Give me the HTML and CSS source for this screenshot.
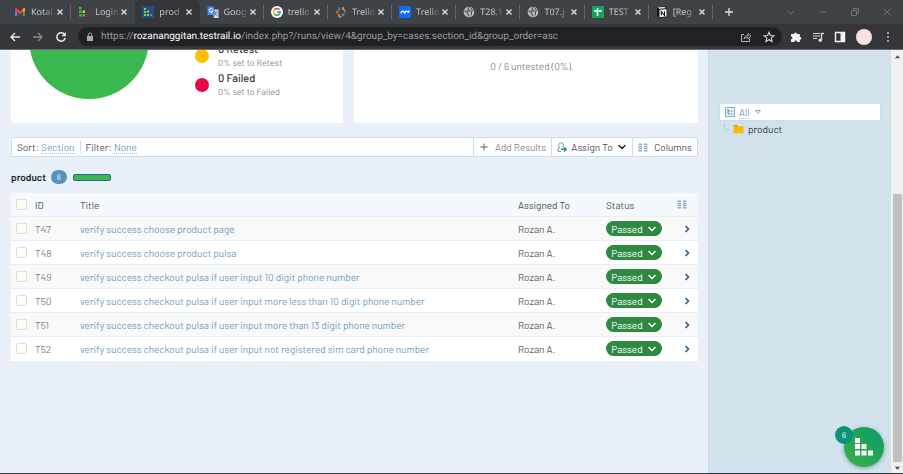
FILE: index.html
```html
<!DOCTYPE html>
<html lang="en">
<head>
<meta charset="utf-8">
<title>product - TestRail</title>
<link rel="stylesheet" href="styles.css">
</head>
<body>
<svg class="defs" aria-hidden="true">
  <symbol id="close" viewBox="0 0 8 8"><path d="M1.500 1.500l5 5m0-5l-5 5" stroke="currentColor" stroke-width="1.300"/></symbol>
  <symbol id="globe" viewBox="0 0 12 12"><circle cx="6" cy="6" r="5.300" fill="#bdc1c6"/><path d="M1.500 4.500l2.500 2.300 1 .2v1.500l1.200 2M6.500 1.200L5 2.500l1 1.200L4.500 5h3l1.200 1.500L8 9.500M8.500 2v1.500l2 1.500" fill="none" stroke="#484b4f" stroke-width="1.100"/></symbol>
  <symbol id="chev" viewBox="0 0 10 10"><path d="M2 3.500l3 3 3-3" fill="none" stroke="currentColor" stroke-width="1.500" stroke-linecap="round" stroke-linejoin="round"/></symbol>
  <symbol id="next" viewBox="0 0 8 10"><path d="M2.500 2l3 3-3 3" fill="none" stroke="#34648c" stroke-width="1.700"/></symbol>
  <symbol id="cols" viewBox="0 0 10 9"><path d="M.5 1.200h3.600M.5 3.400h3.600M.5 5.600h3.600M.5 7.800h3.600M5.900 1.200h3.600M5.900 3.400h3.600M5.900 5.600h3.600M5.900 7.800h3.600" stroke="#8fb0c6" stroke-width="1.500"/></symbol>
</svg>

<header class="browser">
  <div class="strip">
    <nav class="tabs" aria-label="Tabs">
      <div class="tab"><svg class="fav" viewBox="0 0 12 12"><path d="M1 10V3.500h2.200V10z" fill="#4285f4"/><path d="M8.800 10V3.500H11V10z" fill="#34a853"/><path d="M1 4.500V2.600L2.200 2 6 5l3.800-3 1.200.6v1.900L6 8.200z" fill="#ea4335"/><path d="M9 3l1.200-1 .8.800v1.800L9 6z" fill="#fbbc04"/></svg><span class="name">Kotal</span><button class="x" aria-label="Close"><svg><use href="#close"/></svg></button></div>
      <div class="tab nosep"><svg class="fav" viewBox="0 0 12 12"><path d="M1 1h2.500v2.500H1zM1 4.500h2.500V7H1zM1 8h2.500v2.500H1zM4.500 8H7v2.500H4.500z" fill="#3dba52"/><path d="M4.500 4.500H7V7H4.500z" fill="#fdc300"/><path d="M8.500 8.500H11V11H8.500z" fill="#e80548"/></svg><span class="name">Login</span><button class="x" aria-label="Close"><svg><use href="#close"/></svg></button></div>
      <div class="tab active"><svg class="fav" viewBox="0 0 12 12"><path d="M0 0h12v12H0z" fill="#1e5288"/><path d="M2 2h2v2H2zM2 5h2v2H2zM2 8h2v2H2zM5 8h2v2H5z" fill="#7fd34f"/><path d="M5 4.500h2v2H5z" fill="#fdc300"/><path d="M8 8h2v2H8z" fill="#ff4778"/></svg><span class="name">prod</span><button class="x" aria-label="Close"><svg><use href="#close"/></svg></button></div>
      <div class="tab"><svg class="fav" viewBox="0 0 12 12"><path d="M5 3.500h6.500V12H7z" fill="#d6d9dc"/><path d="M7 6h4M9 5v1c0 2-1 3-2 4m1-3l2.500 3" stroke="#6b7f99" fill="none" stroke-width=".8"/><path d="M.5.5h6L9 9H.5z" fill="#4a8af4"/><path d="M5.800 3.500A1.900 1.900 0 1 0 6 5H4.300" fill="none" stroke="#fff"/></svg><span class="name">Goog</span><button class="x" aria-label="Close"><svg><use href="#close"/></svg></button></div>
      <div class="tab"><svg class="fav" viewBox="0 0 12 12"><circle cx="6" cy="6" r="6" fill="#fff"/><g fill="none" stroke-width="1.500"><path d="M3.300 4A3.300 3.300 0 0 1 8.500 3.700" stroke="#ea4335"/><path d="M3.200 4.200a3.300 3.300 0 0 0 0 3.600" stroke="#fbbc05"/><path d="M3.200 7.800a3.300 3.300 0 0 0 5 .6" stroke="#34a853"/><path d="M8.200 8.400C9 7.800 9.300 7 9.300 6.100H6" stroke="#4285f4"/></g></svg><span class="name">trello</span><button class="x" aria-label="Close"><svg><use href="#close"/></svg></button></div>
      <div class="tab"><svg class="fav" viewBox="0 0 12 12"><g fill="none" stroke-width="1.500"><path d="M4.500 1.500v2l-1.200 1" stroke="#36a6d8"/><path d="M8 1v2l2 1.500" stroke="#e9a03b"/><path d="M1 5l2 1-1.500 2" stroke="#e5533d"/><path d="M4 8v2l2 1.500" stroke="#e9a03b"/><path d="M7.500 10.500V9l2-1" stroke="#36a6d8"/><path d="M9 6h2" stroke="#e5533d"/></g></svg><span class="name">Trello</span><button class="x" aria-label="Close"><svg><use href="#close"/></svg></button></div>
      <div class="tab"><svg class="fav" viewBox="0 0 12 12"><rect width="12" height="12" rx="1" fill="#0b6cff"/><path d="M1.800 7.500c1-3 2-2.800 3-1.800s.8 2 1.800.2m-1.200 1.600c1-3 2-2.800 3-1.800s.8 1 1.800-1.200" fill="none" stroke="#fff" stroke-width="1.300"/></svg><span class="name">Trello</span><button class="x" aria-label="Close"><svg><use href="#close"/></svg></button></div>
      <div class="tab"><svg class="fav"><use href="#globe"/></svg><span class="name">T28.1</span><button class="x" aria-label="Close"><svg><use href="#close"/></svg></button></div>
      <div class="tab"><svg class="fav"><use href="#globe"/></svg><span class="name">T07.j</span><button class="x" aria-label="Close"><svg><use href="#close"/></svg></button></div>
      <div class="tab"><svg class="fav" viewBox="0 0 12 12"><path d="M0 0h12v12H0z" fill="#15a35c"/><path d="M2 5h8M5.500 2v8" stroke="#fff" stroke-width="1.500"/></svg><span class="name">TEST</span><button class="x" aria-label="Close"><svg><use href="#close"/></svg></button></div>
      <div class="tab"><svg class="fav" viewBox="0 0 12 12"><path d="M1 1.500L8.500.5 11 2.500V11l-7.500.7L1 9.500z" fill="#111"/><path d="M1.500 1.500L8.300 1l1.500 1.300-6.500.5z" fill="#fff"/><path d="M3.500 3.800l7-.5v7.200l-7 .5z" fill="#fff"/><path d="M5.300 9.500v-4l3.200 4v-4.200" fill="none" stroke="#111" stroke-width="1.100"/></svg><span class="name">[Reg</span><button class="x" aria-label="Close"><svg><use href="#close"/></svg></button></div>
    </nav>
    <div class="window">
      <button aria-label="New tab"><svg viewBox="0 0 10 10"><path d="M5 1v8M1 5h8" stroke="#dee1e6" stroke-width="1.300"/></svg></button>
      <span class="spacer"></span>
      <button aria-label="Search tabs"><svg viewBox="0 0 10 10"><path d="M1.500 3.500L5 7l3.500-3.500" fill="none" stroke="#6e7175"/></svg></button>
      <button aria-label="Minimize"><svg viewBox="0 0 10 10"><path d="M1.500 5h7" stroke="#6e7175"/></svg></button>
      <button aria-label="Restore"><svg viewBox="0 0 10 10"><path d="M1.500 3.500h5v5h-5zM3.500 3V1.500h5v5H7" fill="none" stroke="#6e7175"/></svg></button>
      <button aria-label="Close window"><svg viewBox="0 0 10 10"><path d="M1.500 1.500l7 7m0-7l-7 7" stroke="#6e7175"/></svg></button>
    </div>
  </div>
  <div class="navbar">
    <button aria-label="Back"><svg viewBox="0 0 12 12"><path d="M11 6H2m4-4L2 6l4 4" fill="none" stroke="#e8eaed" stroke-width="1.400"/></svg></button>
    <button aria-label="Forward"><svg viewBox="0 0 12 12"><path d="M1 6h9M6 2l4 4-4 4" fill="none" stroke="#898b8e" stroke-width="1.300"/></svg></button>
    <button aria-label="Reload"><svg viewBox="0 0 12 12"><path d="M9.800 4A4.200 4.200 0 1 0 10.200 6.800" fill="none" stroke="#e8eaed" stroke-width="1.500"/><path d="M10.800 1v4.300H6.500z" fill="#e8eaed"/></svg></button>
    <div class="address">
      <svg class="lock" viewBox="0 0 8 10"><path d="M1 4h6v5H1z" fill="#a6a9ad"/><path d="M2.300 4V2.700a1.700 1.700 0 0 1 3.400 0V4" fill="none" stroke="#a6a9ad"/></svg>
      <span class="url">https://<b>rozananggitan.testrail.io</b>/index.php?/runs/view/4&amp;group_by=cases:section_id&amp;group_order=asc</span>
      <button aria-label="Share"><svg viewBox="0 0 12 12"><path d="M4 3.500H1.500v7h8V8M4 8c.3-2.300 1.800-3.500 4-3.500V2.500l3 2.800-3 2.800V6.300C6.300 6.200 5 6.800 4 8z" fill="none" stroke="#b4b7bb"/></svg></button>
      <button aria-label="Bookmark"><svg viewBox="0 0 12 12"><path d="M6 1.300l1.400 3.200 3.400.3-2.600 2.300.8 3.400-3-1.800-3 1.800.8-3.400L1.200 4.800l3.400-.3z" fill="none" stroke="#d4d6d9" stroke-width="1.100"/></svg></button>
    </div>
    <div class="actions">
      <button aria-label="Extensions"><svg viewBox="0 0 12 12"><path d="M1 3h3a1.500 1.500 0 1 1 3 0h2.800v2.700a1.500 1.500 0 1 1 0 3V11H7.200a1.400 1.400 0 0 0-2.800 0H1V8.300a1.400 1.400 0 0 0 0-2.800z" fill="#f1f3f4"/></svg></button>
      <button aria-label="Media"><svg viewBox="0 0 12 12"><path d="M1 2.500h7M1 5h7M1 7.500h4" stroke="#d4d6d9" stroke-width="1.200"/><path d="M9.500 9V2.500H12" fill="none" stroke="#d4d6d9" stroke-width="1.300"/><circle cx="8.200" cy="9.200" r="1.800" fill="#d4d6d9"/></svg></button>
      <button aria-label="Side panel"><svg viewBox="0 0 12 12"><path d="M1.500 1.500h9v9h-9z" fill="none" stroke="#f1f3f4" stroke-width="1.400"/><path d="M6.500 1.500h4v9h-4z" fill="#f1f3f4"/></svg></button>
      <button class="avatar" aria-label="Profile"></button>
      <button aria-label="Menu"><svg viewBox="0 0 12 12"><path d="M5.200 1.200h1.600v1.600H5.200zM5.200 5.200h1.600v1.600H5.200zM5.200 9.200h1.600v1.600H5.200z" fill="#e8eaed"/></svg></button>
    </div>
  </div>
</header>

<div class="page">
  <main class="main">
    <section class="summary">
      <div class="card status">
        <svg class="pie" viewBox="0 0 120 120"><circle cx="60" cy="60" r="60" fill="#3cb850"/></svg>
        <ul class="legend">
          <li><i class="dot retest"></i><div><strong>0 Retest</strong><small>0% set to Retest</small></div></li>
          <li><i class="dot failed"></i><div><strong>0 Failed</strong><small>0% set to Failed</small></div></li>
        </ul>
      </div>
      <div class="card untested"><p>0 / 6 untested (0%).</p></div>
    </section>

    <div class="toolbar">
      <div class="group">Sort: <a href="#">Section</a></div>
      <div class="group filter">Filter: <a href="#">None</a></div>
      <button class="tool add"><svg viewBox="0 0 10 10"><path d="M5 1.500v7M1.500 5h7" stroke="#888" stroke-width="1.300"/></svg>Add Results</button>
      <button class="tool assign"><svg viewBox="0 0 10 10"><path d="M1 9.300c-.5-2 .3-2.800 1.500-3.300C.8 3 2 .8 4 .8S7 2.500 6 5" fill="none" stroke="#5d8fb5"/><path d="M1 9.300h3" stroke="#5d8fb5"/><path d="M4 7.300h5M7 5.200l2.200 2.100L7 9.400" fill="none" stroke="#159a78" stroke-width="1.400"/></svg>Assign To<svg class="caret" viewBox="0 0 10 10"><use href="#chev"/></svg></button>
      <button class="tool columns"><svg><use href="#cols"/></svg>Columns</button>
    </div>

    <h2 class="section">product <span class="count">6</span><span class="progress"></span></h2>

    <table class="cases">
      <colgroup><col class="c-check"><col class="c-id"><col><col class="c-user"><col class="c-status"><col class="c-next"></colgroup>
      <thead><tr><th><input type="checkbox" aria-label="Select all"></th><th>ID</th><th>Title</th><th>Assigned To</th><th>Status</th><th><svg><use href="#cols"/></svg></th></tr></thead>
      <tbody>
        <tr><td><input type="checkbox" aria-label="Select T47"></td><td>T47</td><td><a href="#">verify success choose product page</a></td><td>Rozan A.</td><td><button class="pill">Passed<svg><use href="#chev"/></svg></button></td><td><svg><use href="#next"/></svg></td></tr>
        <tr><td><input type="checkbox" aria-label="Select T48"></td><td>T48</td><td><a href="#">verify success choose product pulsa</a></td><td>Rozan A.</td><td><button class="pill">Passed<svg><use href="#chev"/></svg></button></td><td><svg><use href="#next"/></svg></td></tr>
        <tr><td><input type="checkbox" aria-label="Select T49"></td><td>T49</td><td><a href="#">verify success checkout pulsa if user input 10 digit phone number</a></td><td>Rozan A.</td><td><button class="pill">Passed<svg><use href="#chev"/></svg></button></td><td><svg><use href="#next"/></svg></td></tr>
        <tr><td><input type="checkbox" aria-label="Select T50"></td><td>T50</td><td><a href="#">verify success checkout pulsa if user input more less than 10 digit phone number</a></td><td>Rozan A.</td><td><button class="pill">Passed<svg><use href="#chev"/></svg></button></td><td><svg><use href="#next"/></svg></td></tr>
        <tr><td><input type="checkbox" aria-label="Select T51"></td><td>T51</td><td><a href="#">verify success checkout pulsa if user input more than 13 digit phone number</a></td><td>Rozan A.</td><td><button class="pill">Passed<svg><use href="#chev"/></svg></button></td><td><svg><use href="#next"/></svg></td></tr>
        <tr><td><input type="checkbox" aria-label="Select T52"></td><td>T52</td><td><a href="#">verify success checkout pulsa if user input not registered sim card phone number</a></td><td>Rozan A.</td><td><button class="pill">Passed<svg><use href="#chev"/></svg></button></td><td><svg><use href="#next"/></svg></td></tr>
      </tbody>
    </table>
  </main>

  <aside class="sidebar">
    <div class="picker"><svg viewBox="0 0 10 10"><path d="M.5.5h9v9h-9z" fill="#eef6fc" stroke="#7ba9d0"/><path d="M3 2v5h2M3 4h2M6 4h2M6 7h2" fill="none" stroke="#4f86b5" stroke-width="1"/></svg><a href="#">All</a><svg class="tri" viewBox="0 0 8 8"><path d="M1.500 2.500h5L4 5.500z" fill="#fff" stroke="#8aa"/></svg></div>
    <div class="node"><i class="branch"></i><svg viewBox="0 0 12 10"><path d="M.5.500h4l1 1.500h6v7.500H.5z" fill="#fbb900"/><path d="M.5.500h4l1 1.500h-5z" fill="#dc9d00"/></svg>product</div>
  </aside>

  <div class="scroll" aria-hidden="true">
    <svg viewBox="0 0 8 8"><path d="M1 5.500h6L4 2z" fill="#505050"/></svg>
    <span class="thumb"></span>
    <svg viewBox="0 0 8 8"><path d="M1 2.500h6L4 6z" fill="#505050"/></svg>
  </div>

  <button class="chat" aria-label="Help">
    <svg viewBox="0 0 18 18"><path d="M0 0h5v5H0zM0 6h5v5H0zM6.500 6h5v5h-5zM0 12.500h5v5H0zM6.500 12.500h5v5h-5zM13 12.500h5v5h-5z" fill="#fff"/></svg>
    <span class="badge">6</span>
  </button>
</div>
</body>
</html>
```
FILE: styles.css
```css
* { box-sizing: border-box; }
body {
  margin: 0;
  height: 100vh;
  display: flex;
  flex-direction: column;
  overflow: hidden;
  font: 10px/12px "Barlow", Roboto, sans-serif;
  text-rendering: geometricPrecision;
  color: #505050;
  background: #3a3c40;
}
button {
  display: flex;
  align-items: center;
  justify-content: center;
  padding: 0;
  border: 0;
  background: none;
  font: inherit;
  color: inherit;
  text-rendering: inherit;
}
svg { display: block; flex: none; width: 10px; height: 10px; }
a { color: #6d9cc6; text-decoration: none; }
.defs { position: absolute; width: 0; height: 0; }

/* Browser frame */
.browser { flex: none; background: #35363a; border-bottom: 1px solid #6b6a6e; }
.strip { display: flex; height: 24px; padding-left: 7px; background: #3f4246; }
.tabs { flex: 1; display: grid; grid-template-columns: repeat(11, minmax(0, 1fr)); }
.tab { position: relative; display: flex; align-items: center; padding: 0 7px; color: #c4c6ca; font-family: "Noto Sans", sans-serif; font-size: 9px; }
.tab::after { content: ""; position: absolute; right: 0; top: 5px; height: 14px; width: 1px; background: #64676b; }
.tab.active { background: #35363a; border-radius: 5px 5px 0 0; }
.tab.nosep::after, .tab.active::after { display: none; }
.fav { width: 12px; height: 12px; }
.name { flex: 1; margin-left: 5px; white-space: nowrap; mask-image: linear-gradient(90deg, #000 50%, transparent); }
.x { color: #dee1e6; }
.x svg { width: 8px; height: 8px; }
.window { flex: none; width: 190px; display: flex; align-items: center; gap: 22px; padding: 0 11px; }
.window .spacer { flex: 1; }
.navbar { display: flex; align-items: center; height: 25px; padding-left: 9px; }
.navbar svg { width: 12px; height: 12px; }
.navbar > button { margin-right: 11px; }
.address { flex: 1; display: flex; align-items: center; gap: 11px; height: 19px; padding: 0 7px 0 8px; border-radius: 10px; background: #202124; }
.navbar .lock { width: 8px; height: 10px; margin-right: -4px; }
.url { flex: 1; white-space: nowrap; font: 10px/14px Roboto, sans-serif; color: #9a9da1; }
.url b { font-weight: 400; color: #fff; }
.actions { flex: none; display: flex; align-items: center; gap: 10px; padding: 0 9px 0 8px; }
.avatar { width: 16px; height: 16px; border-radius: 50%; background: #fbe3e5; }

/* Page */
.page { position: relative; flex: 1; min-height: 0; display: flex; margin-bottom: 1px; background: #e9f0f7; }
.main { flex: 1; min-width: 0; padding: 0 10px 0 11px; }
.summary { display: grid; grid-template-columns: 332fr 344fr; gap: 11px; height: 73px; overflow: hidden; }
.card { display: flex; align-items: flex-end; height: 73px; background: #fff; border-radius: 0 0 3px 3px; padding-bottom: 24px; overflow: hidden; }
.pie { width: 120px; height: 120px; margin: 0 46px 0 18px; }
.legend { list-style: none; margin: 0; padding: 0; }
.legend li { display: flex; align-items: center; gap: 9px; height: 29px; }
.dot { width: 14px; height: 14px; border-radius: 50%; }
.retest { background: #fdc000; }
.failed { background: #e80548; }
.legend strong, .legend small { display: block; }
.legend strong { font-size: 11px; line-height: 14px; font-weight: 500; color: #333; }
.legend small { font-size: 9px; color: #8a8a8a; }
.untested { justify-content: center; align-items: flex-start; padding-top: 10px; padding-left: 12px; }
.untested p { margin: 0; color: #888; }

.toolbar { display: flex; align-items: stretch; height: 20px; margin-top: 14px; background: #fff; border: 1px solid #c6def0; border-radius: 2px; }
.group { align-self: center; padding: 0 5px; }
.group a, .picker a { border-bottom: 1px dotted #a9c6df; }
.filter { flex: 1; border-left: 1px solid #c6def0; }
.tool { gap: 6px; border-left: 1px solid #c6def0; white-space: nowrap; }
.add { width: 78px; color: #8a8a8a; }
.assign { width: 81px; gap: 4px; }
.caret { color: #222; }
.columns { width: 65px; }
.columns svg { height: 9px; }

.section { display: flex; align-items: center; height: 16px; margin: 12px 0 8px; font-size: 10px; font-weight: 600; color: #222; }
.count { width: 16px; height: 14px; margin: 0 6px 0 5px; border-radius: 7px; background: #5592bd; color: #fff; font-size: 8px; font-weight: 400; line-height: 14px; text-align: center; }
.progress { width: 38px; height: 7px; border: 1px solid #33648c; border-radius: 2px; background: #3cb850; }

.cases { width: 100%; table-layout: fixed; border-collapse: separate; border-spacing: 0; }
.cases tr { height: 24px; background: #fff; }
.cases thead tr { background: #f5f9fe; }
.cases tbody tr:nth-child(odd) { background: #f9f9f9; }
.cases th, .cases td { padding: 0; border-bottom: 1px solid #e6eff4; text-align: left; font-weight: 400; vertical-align: middle; white-space: nowrap; }
.cases tbody tr:last-child td { border-bottom-color: transparent; }
.cases td:nth-child(2) { color: #808080; }
.cases td:nth-child(4) { color: #606060; }
.c-check { width: 24px; }
.c-id { width: 45px; }
.c-user { width: 88px; }
.c-status { width: 71px; }
.c-next { width: 21px; }
.cases th svg { height: 9px; }
.cases input { appearance: none; display: block; width: 11px; height: 11px; margin: 0 0 0 5px; border: 1px solid #d3dcf0; border-radius: 2px; background: #ffffee; }
.cases td:last-child { padding-left: 6px; }
.cases td:last-child svg { width: 8px; }
.pill { width: 56px; height: 15px; gap: 4px; border-radius: 8px; background: #2f8a41; color: #fff; }

.sidebar { flex: none; width: 183px; padding: 53px 10px 0; background: #d1e2ec; border-left: 1px solid #c3d9e9; }
.picker { display: flex; align-items: center; gap: 4px; height: 18px; padding-left: 5px; background: #fff; border: 1px solid #c6def0; }
.tri { width: 8px; height: 8px; }
.node { display: flex; align-items: center; height: 15px; padding-left: 5px; color: #333; }
.branch { width: 5px; height: 6px; margin: 0 4px 4px 0; border: dotted #a9bfd0; border-width: 0 0 1px 1px; }
.node svg { width: 11px; margin-right: 4px; }

.scroll { flex: none; width: 12px; display: flex; flex-direction: column; align-items: center; justify-content: space-between; padding: 3px 0 1px; background: #f1f1f1; }
.scroll svg { width: 7px; height: 8px; }
.thumb { width: 9px; height: 64%; margin-top: auto; margin-bottom: 2px; background: #c1c1c1; }

.chat { position: absolute; right: 19px; bottom: 6px; width: 40px; height: 40px; border-radius: 50%; background: linear-gradient(45deg, #3cb043, #0c9a6c); box-shadow: 0 1px 4px #7d9ba8; }
.chat svg { width: 18px; height: 18px; }
.badge { position: absolute; left: -9px; top: -1px; width: 18px; height: 18px; border-radius: 50%; background: #0b9378; color: #fff; font-size: 8px; line-height: 18px; text-align: center; }
```
